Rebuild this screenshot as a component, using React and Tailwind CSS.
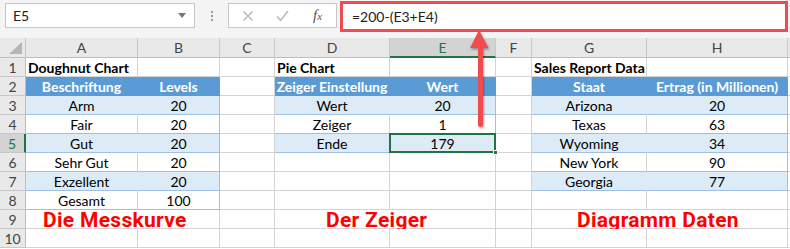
import React from "react";

const COLS = ["A", "B", "C", "D", "E", "F", "G", "H"];

const CELL = "flex items-center h-full whitespace-nowrap border-r border-b";
const TXT = "text-[14px] text-black overflow-hidden";

const variants = {
  plain: `${TXT} bg-white border-r-[#d4d4d4] border-b-[#d4d4d4]`,
  title: "text-[14px] text-black bg-white border-r-[#d4d4d4] border-b-[#d4d4d4] font-bold pl-[2px] overflow-visible",
  head: `${TXT} bg-[#5b9bd5] !text-white font-bold justify-center border-r-[#5b9bd5] border-b-[#5b9bd5]`,
  band: `${TXT} bg-[#ddebf7] justify-center border-b-[#9bc2e6] border-r-[#ddebf7]`,
  bandEnd: `${TXT} bg-[#ddebf7] justify-center border-b-[#9bc2e6] border-r-[#9bc2e6]`,
  white: `${TXT} bg-white justify-center border-b-[#9bc2e6] border-r-[#d4d4d4]`,
  whiteEnd: `${TXT} bg-white justify-center border-b-[#9bc2e6] border-r-[#9bc2e6]`,
  label: "bg-white border-r-[#d4d4d4] border-b-[#d4d4d4] overflow-visible pt-[3px] text-[#ff0000] font-['Roboto',sans-serif] font-bold text-[21px] leading-none tracking-[0.3px]",
};

const p = (t = "") => ({ t, v: "plain" });

// one entry per row, cells for A..H
const rows = [
  [{ t: "Doughnut Chart", v: "title" }, p(), p(), { t: "Pie Chart", v: "title" }, p(), p(), { t: "Sales Report Data", v: "title" }, p()],
  [{ t: "Beschriftung", v: "head" }, { t: "Levels", v: "head" }, p(), { t: "Zeiger Einstellung", v: "head" }, { t: "Wert", v: "head" }, p(), { t: "Staat", v: "head" }, { t: "Ertrag (in Millionen)", v: "head" }],
  [{ t: "Arm", v: "band" }, { t: "20", v: "bandEnd" }, p(), { t: "Wert", v: "band" }, { t: "20", v: "bandEnd" }, p(), { t: "Arizona", v: "band" }, { t: "20", v: "bandEnd" }],
  [{ t: "Fair", v: "white" }, { t: "20", v: "whiteEnd" }, p(), { t: "Zeiger", v: "white" }, { t: "1", v: "whiteEnd" }, p(), { t: "Texas", v: "white" }, { t: "63", v: "whiteEnd" }],
  [{ t: "Gut", v: "band" }, { t: "20", v: "bandEnd" }, p(), { t: "Ende", v: "band" }, { t: "179", v: "bandEnd", selected: true }, p(), { t: "Wyoming", v: "band" }, { t: "34", v: "bandEnd" }],
  [{ t: "Sehr Gut", v: "white" }, { t: "20", v: "whiteEnd" }, p(), p(), p(), p(), { t: "New York", v: "white" }, { t: "90", v: "whiteEnd" }],
  [{ t: "Exzellent", v: "band" }, { t: "20", v: "bandEnd" }, p(), p(), p(), p(), { t: "Georgia", v: "band" }, { t: "77", v: "bandEnd" }],
  [{ t: "Gesamt", v: "white" }, { t: "100", v: "whiteEnd" }, p(), p(), p(), p(), p(), p()],
  [{ t: "Die Messkurve", v: "label", span: "col-span-2", pad: "pl-[17px]" }, p(), { t: "Der Zeiger", v: "label", span: "col-span-2", pad: "pl-[51px]" }, p(), { t: "Diagramm Daten", v: "label", span: "col-span-2", pad: "pl-[45px]" }],
  [p(), p(), p(), p(), p(), p(), p(), p()],
];

const FormulaBar = () => (
  <div className="flex items-start h-[38px] bg-[#f4f4f4]">
    <div className="ml-[5px] mt-[3px] w-[190px] h-[25px] bg-white border border-[#c6c6c6] flex items-center justify-between pl-[7px] pr-[8px] text-[14px] text-[#222]">
      <span>E5</span>
      <span className="w-0 h-0 border-l-[4px] border-r-[4px] border-t-[5px] border-l-transparent border-r-transparent border-t-[#777]" />
    </div>
    <div className="w-[33px] h-[31px] flex flex-col items-center justify-center gap-[2px]">
      <span className="w-[2px] h-[2px] bg-[#9a9a9a]" />
      <span className="w-[2px] h-[2px] bg-[#9a9a9a]" />
      <span className="w-[2px] h-[2px] bg-[#9a9a9a]" />
    </div>
    <div className="mt-[3px] w-[109px] h-[25px] bg-white border border-[#c6c6c6] flex items-center">
      <svg width="12" height="12" viewBox="0 0 12 12" className="ml-[13px]">
        <path d="M1.5 1.5l9 9M10.5 1.5l-9 9" stroke="#b4b4b4" strokeWidth="1.3" fill="none" />
      </svg>
      <svg width="13" height="12" viewBox="0 0 13 12" className="ml-[22px]">
        <path d="M1 6.5l3.5 4L12 1" stroke="#b4b4b4" strokeWidth="1.4" fill="none" />
      </svg>
      <span className="ml-[24px] font-['Liberation_Serif',serif] italic text-[15px] text-[#555] leading-none">
        f<span className="text-[11px]">x</span>
      </span>
    </div>
    <div className="ml-[3px] mt-[1px] w-[448px] h-[31px] bg-white border-[3px] border-[#f04b4f] flex items-center pl-[9px] text-[14px] text-[#222]">
      =200-(E3+E4)
    </div>
  </div>
);

const Arrow = () => (
  <svg className="absolute left-[466px] top-[28px]" width="28" height="102" viewBox="0 0 28 102">
    <defs>
      <filter id="sh" x="-50%" y="-20%" width="200%" height="140%">
        <feDropShadow dx="1" dy="1.5" stdDeviation="1.2" floodColor="#000" floodOpacity="0.35" />
      </filter>
    </defs>
    <g filter="url(#sh)">
      <path d="M13 2L22.5 20H17V96.5a2.5 2.5 0 0 1-5 0V20H4Z" fill="#f04b4f" />
    </g>
  </svg>
);

export default function App() {
  return (
    <div className="relative w-[790px] h-[249px] overflow-hidden bg-white font-['Lato','Noto_Sans',sans-serif]">
      <FormulaBar />
      <div className="grid grid-cols-[26px_112px_82px_55px_115px_106px_36px_115px_141px_2px] grid-rows-[20px_repeat(10,19px)]">
        <div className="relative bg-[#e9e9e9] border-r border-b border-r-[#c8c8c8] border-b-[#bdbdbd]">
          <svg className="absolute right-[3px] bottom-[3px]" width="13" height="12" viewBox="0 0 13 12">
            <path d="M13 0V12H0Z" fill="#b5b5b5" />
          </svg>
        </div>
        {COLS.map((c) =>
          c === "E" ? (
            <div key={c} className="flex items-center justify-center bg-[#d3d3d3] border-r border-r-[#c8c8c8] border-b-2 border-b-[#217346] text-[14px] text-[#217346]">
              {c}
            </div>
          ) : (
            <div key={c} className="flex items-center justify-center bg-[#e9e9e9] border-r border-b border-r-[#c8c8c8] border-b-[#bdbdbd] text-[14px] text-[#444]">
              {c}
            </div>
          )
        )}
        <div className="bg-[#e9e9e9] border-b border-b-[#bdbdbd]" />

        {rows.map((row, i) => (
          <React.Fragment key={i}>
            {i === 4 ? (
              <div className="flex items-center justify-center bg-[#d3d3d3] border-r-2 border-r-[#217346] border-b border-b-[#c8c8c8] text-[14px] text-[#217346]">
                {i + 1}
              </div>
            ) : (
              <div className="flex items-center justify-center bg-[#e9e9e9] border-r border-b border-r-[#bdbdbd] border-b-[#c8c8c8] text-[14px] text-[#444]">
                {i + 1}
              </div>
            )}
            {row.map((cell, j) => (
              <div key={j} className={`${CELL} ${variants[cell.v]} ${cell.span || ""} ${cell.pad || ""} ${cell.selected ? "relative !overflow-visible" : ""}`}>
                {cell.t}
                {cell.selected && (
                  <>
                    <span className="absolute -left-[1px] -top-[1px] -right-[1px] -bottom-[1px] border-2 border-[#217346]" />
                    <span className="absolute -right-[3px] -bottom-[3px] w-[5px] h-[5px] bg-[#217346] border border-white" />
                  </>
                )}
              </div>
            ))}
            <div className="bg-white border-b border-b-[#d4d4d4]" />
          </React.Fragment>
        ))}
      </div>
      <Arrow />
    </div>
  );
}
